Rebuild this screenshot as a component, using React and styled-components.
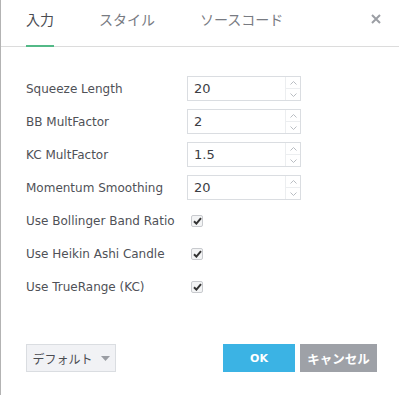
import { createGlobalStyle, styled } from "styled-components";

const GlobalStyle = createGlobalStyle`
  html, body {
    margin: 0;
    padding: 0;
    background: #ffffff;
  }
  body {
    font-family: "DejaVu Sans", "Noto Sans CJK JP", sans-serif;
  }
`;

const inputs = [
  { label: "Squeeze Length", value: "20" },
  { label: "BB MultFactor", value: "2" },
  { label: "KC MultFactor", value: "1.5" },
  { label: "Momentum Smoothing", value: "20" },
];

const checks = [
  "Use Bollinger Band Ratio",
  "Use Heikin Ashi Candle",
  "Use TrueRange (KC)",
];

const App = () => {
  return (
    <>
      <GlobalStyle />
      <Dialog>
        <Header>
          <Tabs>
            <Tab active>入力</Tab>
            <Tab>スタイル</Tab>
            <Tab>ソースコード</Tab>
          </Tabs>
          <CloseButton>
            <svg width="10" height="10" viewBox="0 0 10 10">
              <path d="M1 1 L9 9 M9 1 L1 9" stroke="#9b9ea4" strokeWidth="2" />
            </svg>
          </CloseButton>
        </Header>
        <Content>
          {inputs.map((item) => (
            <Row key={item.label}>
              <Label>{item.label}</Label>
              <NumberField>
                <span className="value">{item.value}</span>
                <Spinner>
                  <span>
                    <svg width="7" height="4" viewBox="0 0 7 4">
                      <path d="M0.5 3.5 L3.5 0.5 L6.5 3.5" fill="none" stroke="#b9bdc2" />
                    </svg>
                  </span>
                  <span>
                    <svg width="7" height="4" viewBox="0 0 7 4">
                      <path d="M0.5 0.5 L3.5 3.5 L6.5 0.5" fill="none" stroke="#b9bdc2" />
                    </svg>
                  </span>
                </Spinner>
              </NumberField>
            </Row>
          ))}
          {checks.map((label) => (
            <Row key={label}>
              <Label>{label}</Label>
              <CheckBox>
                <svg width="9" height="8" viewBox="0 0 9 8">
                  <path d="M1 4.2 L3.4 6.6 L8 1.2" fill="none" stroke="#333" strokeWidth="2" />
                </svg>
              </CheckBox>
            </Row>
          ))}
        </Content>
        <Footer>
          <DefaultButton>
            デフォルト
            <svg width="9" height="5" viewBox="0 0 9 5">
              <path d="M0 0 L9 0 L4.5 5 Z" fill="#9a9da3" />
            </svg>
          </DefaultButton>
          <Actions>
            <ActionButton primary>OK</ActionButton>
            <ActionButton>キャンセル</ActionButton>
          </Actions>
        </Footer>
      </Dialog>
    </>
  );
};

export default App;

const Dialog = styled.div`
  width: 398px;
  height: 395px;
  border-left: 1px solid #b3b3b3;
  background: #ffffff;
  display: flex;
  flex-direction: column;
`;

const Header = styled.div`
  height: 46px;
  border-bottom: 1px solid #dcdcdc;
  display: flex;
  justify-content: space-between;
  align-items: stretch;
  padding: 0 18px 0 25px;
`;

const Tabs = styled.div`
  display: flex;
  gap: 45px;
`;

const Tab = styled.div`
  font-family: "Noto Sans CJK JP", sans-serif;
  font-size: 14px;
  color: ${(props) => (props.active ? "#4a4c52" : "#787b82")};
  display: flex;
  align-items: center;
  padding-bottom: 8px;
  box-sizing: border-box;
  border-bottom: 2px solid ${(props) => (props.active ? "#53b987" : "transparent")};
  margin-bottom: -1px;
`;

const CloseButton = styled.div`
  display: flex;
  align-items: flex-start;
  padding-top: 14px;
`;

const Content = styled.div`
  flex: 1;
  padding: 29px 0 0 25px;
  display: flex;
  flex-direction: column;
  gap: 8px;
`;

const Row = styled.div`
  height: 25px;
  display: grid;
  grid-template-columns: 161px auto;
  align-items: center;
`;

const Label = styled.div`
  font-size: 12px;
  color: #4f5157;
`;

const NumberField = styled.div`
  width: 114px;
  height: 25px;
  box-sizing: border-box;
  border: 1px solid #dadde1;
  display: flex;
  & .value {
    flex: 1;
    padding-left: 6px;
    font-size: 13px;
    line-height: 23px;
    color: #3c3e44;
  }
`;

const Spinner = styled.div`
  width: 14px;
  border-left: 1px solid #eceef0;
  display: flex;
  flex-direction: column;
  & span {
    flex: 1;
    display: flex;
    align-items: center;
    justify-content: center;
  }
  & span + span {
    border-top: 1px solid #eceef0;
  }
`;

const CheckBox = styled.div`
  width: 12px;
  height: 12px;
  margin-left: 4px;
  box-sizing: border-box;
  border: 1px solid #c8cace;
  border-radius: 2px;
  background: #f3f4f5;
  display: flex;
  align-items: center;
  justify-content: center;
`;

const Footer = styled.div`
  display: flex;
  justify-content: space-between;
  align-items: center;
  padding: 0 22px 23px 25px;
`;

const DefaultButton = styled.div`
  width: 90px;
  height: 28px;
  box-sizing: border-box;
  border: 1px solid #dadde1;
  background: #f1f2f5;
  display: flex;
  align-items: center;
  justify-content: center;
  gap: 8px;
  font-family: "Noto Sans CJK JP", sans-serif;
  font-size: 12px;
  color: #4a4c52;
`;

const Actions = styled.div`
  display: flex;
  gap: 5px;
`;

const ActionButton = styled.div`
  width: ${(props) => (props.primary ? "72px" : "77px")};
  height: 28px;
  background: ${(props) => (props.primary ? "#3bb3e4" : "#9ea1a7")};
  color: #ffffff;
  font-family: "DejaVu Sans", "Noto Sans CJK JP", sans-serif;
  font-weight: bold;
  font-size: ${(props) => (props.primary ? "11px" : "12.5px")};
  display: flex;
  align-items: center;
  justify-content: center;
`;
